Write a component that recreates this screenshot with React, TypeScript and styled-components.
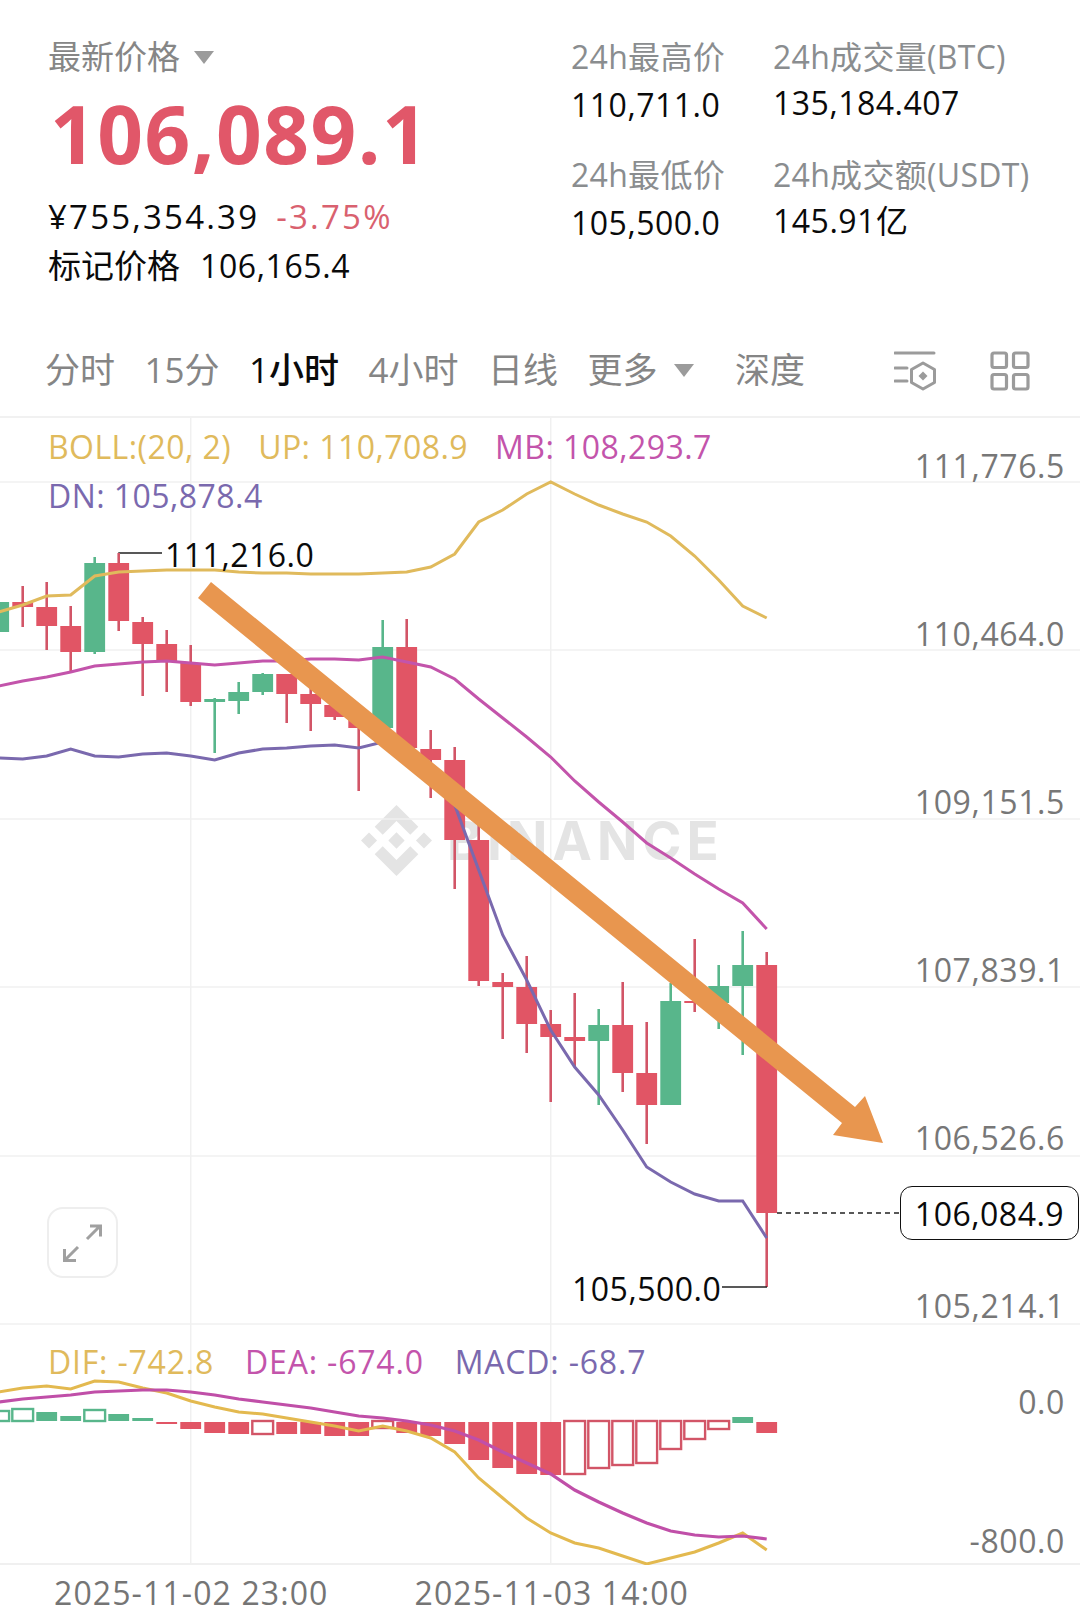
import styled, { createGlobalStyle } from 'styled-components';

const RED = '#e15565';
const WICK_RED = '#d25567';
const GREEN = '#58b68b';
const YELLOW = '#e0ba5c';
const MAGENTA = '#c354ab';
const PURPLE = '#7a69ae';
const GRID = '#f0f0f0';
const FONT = '"Open Sans", "Noto Sans CJK SC", sans-serif';

const GlobalStyle = createGlobalStyle`
    html, body {
        margin: 0;
        padding: 0;
        background: #ffffff;
    }
    body {
        font-family: ${FONT};
        width: 1080px;
        height: 1611px;
        overflow: hidden;
    }
`;

const Page = styled.div`
    width: 1080px;
    height: 1611px;
    display: flex;
    flex-direction: column;
`;

const Header = styled.header`
    display: flex;
    height: 331px;
    padding: 35px 0 0 48px;
    box-sizing: border-box;
`;

const PriceBlock = styled.div`
    width: 523px;
    display: flex;
    flex-direction: column;
`;

const PriceLabel = styled.div`
    display: flex;
    align-items: center;
    gap: 14px;
    font-size: 33px;
    line-height: 44px;
    color: #868686;
`;

const Caret = styled.span`
    width: 0;
    height: 0;
    border-left: 10px solid transparent;
    border-right: 10px solid transparent;
    border-top: 13px solid #9b9b9b;
`;

const BigPrice = styled.div`
    margin: 9px 0 0 2px;
    font-size: 80px;
    line-height: 90px;
    font-weight: 700;
    letter-spacing: 1.5px;
    color: #e15769;
`;

const SubRow = styled.div`
    display: flex;
    gap: 17px;
    margin-top: 19px;
    font-size: 33px;
    line-height: 40px;
    font-weight: 500;
    letter-spacing: 2.2px;
    color: #0a0a0a;
`;

const Change = styled.span`
    font-weight: 400;
    color: #d9616f;
`;

const MarkRow = styled.div`
    display: flex;
    gap: 20px;
    margin-top: 9px;
    font-size: 33px;
    line-height: 40px;
    color: #0a0a0a;
`;

const MarkValue = styled.span`
    font-size: 32px;
    font-weight: 500;
    letter-spacing: 0.6px;
`;

const Stats = styled.div`
    display: grid;
    grid-template-columns: 202px auto;
    grid-template-rows: 118px 118px;
    grid-auto-flow: column;
`;

const Stat = styled.div`
    display: flex;
    flex-direction: column;
`;

const StatLabel = styled.div`
    font-size: 32px;
    line-height: 44px;
    letter-spacing: 0.3px;
    color: #8a8d8f;
`;

const StatValue = styled.div<{ $tight?: boolean }>`
    margin-top: ${(p) => (p.$tight ? 6 : 8)}px;
    font-size: 32px;
    line-height: 36px;
    letter-spacing: 0.5px;
    color: #0a0a0a;
`;

const TabBar = styled.nav`
    display: flex;
    align-items: center;
    gap: 29.5px;
    height: 87px;
    padding: 0 50px 7px 45px;
    box-sizing: border-box;
    border-bottom: 2px solid #f1f1f1;
`;

const Tab = styled.span<{ $active?: boolean }>`
    font-size: 35px;
    line-height: 44px;
    font-weight: ${(p) => (p.$active ? 500 : 400)};
    color: ${(p) => (p.$active ? '#0a0a0a' : '#858585')};
`;

const TabWithCaret = styled.span`
    display: flex;
    align-items: center;
    gap: 16px;
    margin-right: 12px;
`;

const ToolIcons = styled.div`
    display: flex;
    align-items: center;
    gap: 53px;
    margin: 2px 0 0 auto;
`;

const MainPane = styled.section`
    position: relative;
    height: 907px;
`;

const MacdPane = styled.section`
    position: relative;
    height: 240px;
`;

const ChartSvg = styled.svg`
    position: absolute;
    left: 0;
    top: 0;
`;

const Watermark = styled.div`
    position: absolute;
    left: 361px;
    top: 387px;
    display: flex;
    align-items: center;
    gap: 15px;
    color: #e4e4e4;
    font-family: Inter, sans-serif;
    font-size: 53px;
    line-height: 70px;
    font-weight: 700;
    letter-spacing: 5px;
`;

const Legend = styled.div<{ $top: number; $gap: number; $spacing: number }>`
    position: relative;
    display: flex;
    flex-direction: column;
    gap: 9px;
    padding: ${(p) => p.$top}px 0 0 48px;
    font-size: 32px;
    line-height: 40px;
    letter-spacing: ${(p) => p.$spacing}px;
    > div {
        display: flex;
        gap: ${(p) => p.$gap}px;
    }
`;

const LegendItem = styled.span<{ $color: string }>`
    color: ${(p) => p.$color};
`;

const AxisColumn = styled.div<{ $top: number; $gap: number }>`
    position: absolute;
    right: 15px;
    top: ${(p) => p.$top}px;
    display: flex;
    flex-direction: column;
    align-items: flex-end;
    gap: ${(p) => p.$gap}px;
`;

const AxisLabel = styled.span`
    font-size: 32px;
    line-height: 36px;
    letter-spacing: 0.6px;
    color: #777777;
`;

const PriceTag = styled.div`
    position: absolute;
    left: 900px;
    top: 768px;
    width: 179px;
    height: 54px;
    box-sizing: border-box;
    display: flex;
    align-items: center;
    justify-content: center;
    border: 1.5px solid #111111;
    border-radius: 12px;
    background: #ffffff;
    font-size: 32px;
    letter-spacing: 0.5px;
    color: #0a0a0a;
`;

const PriceNote = styled.span<{ $x: number; $y: number }>`
    position: absolute;
    left: ${(p) => p.$x}px;
    top: ${(p) => p.$y}px;
    font-size: 32px;
    line-height: 36px;
    letter-spacing: 0.5px;
    color: #0a0a0a;
`;

const ExpandButton = styled.div`
    position: absolute;
    left: 47px;
    top: 789px;
    width: 71px;
    height: 71px;
    box-sizing: border-box;
    display: flex;
    align-items: center;
    justify-content: center;
    border: 2px solid #eeeeee;
    border-radius: 16px;
    background: #ffffff;
`;

const TimeAxis = styled.div`
    display: flex;
    gap: 86px;
    height: 46px;
    padding: 10px 0 0 54px;
    box-sizing: border-box;
    font-size: 32px;
    line-height: 36px;
    letter-spacing: 1.1px;
    color: #757575;
`;

// [wick top, wick bottom, body top, body bottom, colour]; the first one sits at x = -1.3
type Candle = [number, number, number, number, string];

const candles: Candle[] = [
    [583, 661, 602, 632, GREEN],
    [586, 627, 602, 607, RED],
    [582, 650, 607, 626, RED],
    [606, 672, 626, 652, RED],
    [557, 654, 563, 652, GREEN],
    [553, 631, 563, 621, RED],
    [617, 696, 622, 644, RED],
    [630, 692, 644, 661, RED],
    [645, 706, 663, 702, RED],
    [698, 753, 699, 702, GREEN],
    [682, 714, 692, 701, GREEN],
    [673, 695, 674, 692, GREEN],
    [674, 723, 674, 694, RED],
    [688, 731, 694, 704, RED],
    [700, 720, 705, 717, RED],
    [717, 791, 718, 728, RED],
    [620, 730, 647, 728, GREEN],
    [619, 750, 647, 748, RED],
    [730, 798, 749, 760, RED],
    [747, 889, 760, 840, RED],
    [820, 986, 840, 981, RED],
    [973, 1039, 982, 987, RED],
    [956, 1053, 987, 1024, RED],
    [1010, 1102, 1024, 1037, RED],
    [993, 1067, 1037, 1041, RED],
    [1009, 1105, 1025, 1041, GREEN],
    [982, 1092, 1025, 1073, RED],
    [1022, 1144, 1073, 1105, RED],
    [983, 1105, 1001, 1105, GREEN],
    [939, 1012, 1001, 1003, RED],
    [965, 1029, 986, 1003, GREEN],
    [931, 1055, 965, 986, GREEN],
    [952, 1287, 965, 1213, RED],
];

const slotX = (i: number) => -1.3 + i * 24;

const toPolyline = (ys: number[]) => ys.map((y, i) => `${slotX(i)},${y}`).join(' ');

const bollUp = [
    612, 605, 596, 595, 576, 572, 571, 570, 570, 570, 572, 573, 573, 574, 574, 574, 573, 572, 567, 554, 522,
    510, 494, 482, 494, 505, 514, 522, 536, 556, 580, 606, 618,
];
const bollMid = [
    686, 681, 677, 672, 666, 664, 662, 661, 663, 665, 663, 661, 661, 659, 659, 660, 657, 662, 667, 679, 699,
    718, 737, 757, 781, 802, 822, 843, 858, 874, 889, 903, 929,
];
const bollDown = [
    758, 759, 756, 749, 756, 757, 754, 753, 756, 760, 753, 749, 748, 746, 745, 748, 742, 745, 765, 805, 870,
    935, 980, 1030, 1067, 1095, 1130, 1167, 1182, 1194, 1201, 1201, 1238,
];

const dif = [
    1392, 1388, 1386, 1389, 1381, 1382, 1388, 1393, 1401, 1407, 1412, 1414, 1418, 1422, 1426, 1431, 1426, 1431,
    1438, 1452, 1478, 1498, 1518, 1533, 1543, 1548, 1556, 1564, 1558, 1552, 1543, 1533, 1550,
];
const dea = [
    1402, 1399, 1397, 1395, 1392, 1391, 1390, 1390, 1392, 1395, 1399, 1402, 1405, 1408, 1412, 1416, 1418, 1421,
    1425, 1431, 1440, 1452, 1463, 1474, 1490, 1502, 1513, 1523, 1531, 1535, 1537, 1536, 1539,
];

// [top, bottom, colour, hollow]
type MacdBar = [number, number, string, boolean?];

const macdBars: MacdBar[] = [
    [1411, 1421, GREEN, true],
    [1409, 1421, GREEN, true],
    [1412, 1421, GREEN],
    [1416, 1421, GREEN],
    [1410, 1421, GREEN, true],
    [1414, 1421, GREEN],
    [1418, 1421, GREEN],
    [1422, 1424, RED],
    [1422, 1429, RED],
    [1422, 1433, RED],
    [1422, 1434, RED],
    [1421, 1434, WICK_RED, true],
    [1422, 1434, RED],
    [1422, 1434, RED],
    [1422, 1436, RED],
    [1422, 1436, RED],
    [1421, 1428, WICK_RED, true],
    [1422, 1433, RED],
    [1422, 1436, RED],
    [1422, 1444, RED],
    [1422, 1460, RED],
    [1422, 1468, RED],
    [1422, 1474, RED],
    [1422, 1475, RED],
    [1421, 1474, WICK_RED, true],
    [1421, 1468, WICK_RED, true],
    [1421, 1465, WICK_RED, true],
    [1421, 1463, WICK_RED, true],
    [1421, 1449, WICK_RED, true],
    [1421, 1439, WICK_RED, true],
    [1421, 1429, WICK_RED, true],
    [1417, 1423, GREEN],
    [1422, 1433, RED],
];

function BinanceMark() {
    return (
        <svg width="71" height="71" viewBox="0 0 126.61 126.61" fill="currentColor">
            <path d="M38.73 53.2L63.3 28.63l24.59 24.58 14.3-14.3L63.3 0 24.43 38.9l14.3 14.3zM0 63.31l14.3-14.3 14.3 14.3-14.3 14.3zM38.73 73.41L63.3 97.98l24.59-24.58 14.31 14.29-38.9 38.92-38.88-38.9-.02-.02zM97.99 63.31l14.3-14.3 14.32 14.3-14.3 14.31zM77.83 63.3L63.3 48.76 52.56 59.5l-1.24 1.24-2.54 2.54 14.52 14.52 14.53-14.5z" />
        </svg>
    );
}

function IndicatorIcon() {
    return (
        <svg width="43" height="40" viewBox="897 352 43 40" fill="none" stroke="#9b9b9b" strokeWidth="3" strokeLinecap="round">
            <path d="M898 354h39M898 369h12M898 382h12" />
            <path d="M926 364l11.5 6.5v13L926 390l-11.5-6.5v-13z" strokeLinejoin="round" />
            <path d="M926 372.5l4.5 4.5-4.5 4.5-4.5-4.5z" fill="#9b9b9b" stroke="none" />
        </svg>
    );
}

function LayoutIcon() {
    return (
        <svg width="40" height="40" viewBox="0 0 40 40" fill="none" stroke="#9b9b9b" strokeWidth="3.2">
            <rect x="2" y="2" width="14.5" height="14.5" rx="2" />
            <rect x="23.5" y="2" width="14.5" height="14.5" rx="2" />
            <rect x="2" y="23.5" width="14.5" height="14.5" rx="2" />
            <rect x="23.5" y="23.5" width="14.5" height="14.5" rx="2" />
        </svg>
    );
}

function ExpandIcon() {
    return (
        <svg width="44" height="44" viewBox="0 0 44 44" fill="none" stroke="#a0a0a0" strokeWidth="3">
            <path d="M26 18l13-13M29 5h10.5v10.500M17 26L4 39M3.500 28v11.500H15" />
        </svg>
    );
}

function MainChart() {
    return (
        <ChartSvg width="1080" height="907" viewBox="0 418 1080 907">
            {[482, 650, 819, 987, 1156, 1324].map((y) => (
                <line key={y} x1="0" x2="1080" y1={y} y2={y} stroke={GRID} strokeWidth="1.5" />
            ))}
            {[190.7, 550.7].map((x) => (
                <line key={x} x1={x} x2={x} y1="418" y2="1325" stroke={GRID} strokeWidth="1.5" />
            ))}
            <polyline points="119,563 119,553 162,553" fill="none" stroke="#222222" strokeWidth="1.5" />
            {candles.map(([wickTop, wickBottom, top, bottom, color], i) => (
                <g key={i}>
                    <line
                        x1={slotX(i)}
                        x2={slotX(i)}
                        y1={wickTop}
                        y2={wickBottom}
                        stroke={color === RED ? WICK_RED : color}
                        strokeWidth="2.6"
                    />
                    <rect x={slotX(i) - 10.4} y={top} width="20.8" height={bottom - top} fill={color} />
                </g>
            ))}
            <polyline points={toPolyline(bollUp)} fill="none" stroke={YELLOW} strokeWidth="3" />
            <polyline points={toPolyline(bollMid)} fill="none" stroke={MAGENTA} strokeWidth="3" />
            <polyline points={toPolyline(bollDown)} fill="none" stroke={PURPLE} strokeWidth="3" />
            <line x1="777" x2="900" y1="1213" y2="1213" stroke="#222222" strokeWidth="1.5" strokeDasharray="5 4" />
            <polyline points="722,1287 767,1287" fill="none" stroke="#222222" strokeWidth="1.5" />
            <polygon points="211,582 855,1107 865,1096 883,1143 833,1135 842,1123 198,598" fill="#e8964f" />
        </ChartSvg>
    );
}

function MacdChart() {
    return (
        <ChartSvg width="1080" height="240" viewBox="0 1325 1080 240">
            <line x1="0" x2="1080" y1="1564" y2="1564" stroke={GRID} strokeWidth="2" />
            {[190.7, 550.7].map((x) => (
                <line key={x} x1={x} x2={x} y1="1325" y2="1565" stroke={GRID} strokeWidth="1.5" />
            ))}
            {macdBars.map(([top, bottom, color, hollow], i) =>
                hollow ? (
                    <rect
                        key={i}
                        x={slotX(i) - 10.4}
                        y={top}
                        width="20.8"
                        height={bottom - top}
                        fill="#ffffff"
                        stroke={color}
                        strokeWidth="2.4"
                    />
                ) : (
                    <rect key={i} x={slotX(i) - 10.4} y={top} width="20.8" height={bottom - top} fill={color} />
                ),
            )}
            <polyline points={toPolyline(dif)} fill="none" stroke="#e3b94f" strokeWidth="3" />
            <polyline points={toPolyline(dea)} fill="none" stroke="#c04fa8" strokeWidth="3.2" />
        </ChartSvg>
    );
}

export default function App() {
    return (
        <Page>
            <GlobalStyle />
            <Header>
                <PriceBlock>
                    <PriceLabel>
                        最新价格
                        <Caret />
                    </PriceLabel>
                    <BigPrice>106,089.1</BigPrice>
                    <SubRow>
                        <span>¥755,354.39</span>
                        <Change>-3.75%</Change>
                    </SubRow>
                    <MarkRow>
                        <span>标记价格</span>
                        <MarkValue>106,165.4</MarkValue>
                    </MarkRow>
                </PriceBlock>
                <Stats>
                    <Stat>
                        <StatLabel>24h最高价</StatLabel>
                        <StatValue>110,711.0</StatValue>
                    </Stat>
                    <Stat>
                        <StatLabel>24h最低价</StatLabel>
                        <StatValue>105,500.0</StatValue>
                    </Stat>
                    <Stat>
                        <StatLabel>24h成交量(BTC)</StatLabel>
                        <StatValue $tight>135,184.407</StatValue>
                    </Stat>
                    <Stat>
                        <StatLabel>24h成交额(USDT)</StatLabel>
                        <StatValue $tight>145.91亿</StatValue>
                    </Stat>
                </Stats>
            </Header>
            <TabBar>
                <Tab>分时</Tab>
                <Tab>15分</Tab>
                <Tab $active>1小时</Tab>
                <Tab>4小时</Tab>
                <Tab>日线</Tab>
                <TabWithCaret>
                    <Tab>更多</Tab>
                    <Caret />
                </TabWithCaret>
                <Tab>深度</Tab>
                <ToolIcons>
                    <IndicatorIcon />
                    <LayoutIcon />
                </ToolIcons>
            </TabBar>
            <MainPane>
                <Watermark>
                    <BinanceMark />
                    BINANCE
                </Watermark>
                <MainChart />
                <Legend $top={9} $gap={27} $spacing={0.45}>
                    <div>
                        <LegendItem $color={YELLOW}>BOLL:(20, 2)</LegendItem>
                        <LegendItem $color={YELLOW}>UP: 110,708.9</LegendItem>
                        <LegendItem $color={MAGENTA}>MB: 108,293.7</LegendItem>
                    </div>
                    <div>
                        <LegendItem $color={PURPLE}>DN: 105,878.4</LegendItem>
                    </div>
                </Legend>
                <AxisColumn $top={30} $gap={132}>
                    <AxisLabel>111,776.5</AxisLabel>
                    <AxisLabel>110,464.0</AxisLabel>
                    <AxisLabel>109,151.5</AxisLabel>
                    <AxisLabel>107,839.1</AxisLabel>
                    <AxisLabel>106,526.6</AxisLabel>
                    <AxisLabel>105,214.1</AxisLabel>
                </AxisColumn>
                <PriceNote $x={165} $y={119}>
                    111,216.0
                </PriceNote>
                <PriceNote $x={572} $y={853}>
                    105,500.0
                </PriceNote>
                <PriceTag>106,084.9</PriceTag>
                <ExpandButton>
                    <ExpandIcon />
                </ExpandButton>
            </MainPane>
            <MacdPane>
                <MacdChart />
                <Legend $top={17} $gap={31} $spacing={0.8}>
                    <div>
                        <LegendItem $color={YELLOW}>DIF: -742.8</LegendItem>
                        <LegendItem $color={MAGENTA}>DEA: -674.0</LegendItem>
                        <LegendItem $color={PURPLE}>MACD: -68.7</LegendItem>
                    </div>
                </Legend>
                <AxisColumn $top={59} $gap={103}>
                    <AxisLabel>0.0</AxisLabel>
                    <AxisLabel>-800.0</AxisLabel>
                </AxisColumn>
            </MacdPane>
            <TimeAxis>
                <span>2025-11-02 23:00</span>
                <span>2025-11-03 14:00</span>
            </TimeAxis>
        </Page>
    );
}
